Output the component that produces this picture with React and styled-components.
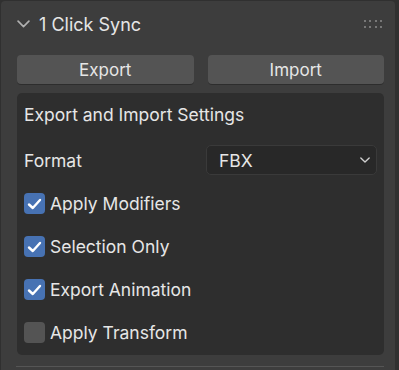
import React, { useState } from "react";
import styled, { createGlobalStyle } from "styled-components";

const Global = createGlobalStyle`
  html, body {
    margin: 0;
    padding: 0;
    background: #303030;
  }
  body {
    font-family: Inter, "Noto Sans", "DejaVu Sans", sans-serif;
    -webkit-font-smoothing: antialiased;
  }
`;

const Screen = styled.div`
  width: 399px;
  height: 370px;
  overflow: hidden;
  padding: 1px 4px 0 1px;
  box-sizing: border-box;
  background: #303030;
`;

const Panel = styled.div`
  height: 100%;
  background: #3d3d3d;
  border-radius: 4px 4px 0 0;
  display: flex;
  flex-direction: column;
`;

const Header = styled.div`
  height: 46px;
  display: flex;
  align-items: center;
  padding: 0 13px 0 16px;
  color: #e6e6e6;
  font-size: 18px;
`;

const Title = styled.span`
  margin-left: 9px;
  flex: 1;
`;

const Grip = styled.div`
  display: grid;
  grid-template-columns: repeat(4, 2px);
  grid-auto-rows: 2px;
  column-gap: 3.5px;
  row-gap: 3.5px;
  span {
    width: 2px;
    height: 2px;
    border-radius: 1px;
    background: #8c8c8c;
  }
`;

const ButtonRow = styled.div`
  display: grid;
  grid-template-columns: 1fr 1fr;
  gap: 14px;
  padding: 8px 11px 0 16px;
`;

const Button = styled.button`
  height: 29px;
  border: none;
  border-radius: 4px;
  background: #545454;
  color: #e6e6e6;
  font-family: inherit;
  font-size: 17px;
  padding: 0;
  box-shadow: 0 1px 0 rgba(0, 0, 0, 0.25);
`;

const Box = styled.div`
  margin: 9px 11px 0 16px;
  height: 262px;
  background: #2e2e2e;
  border-radius: 5px;
  padding: 0 7px;
  display: flex;
  flex-direction: column;
  color: #e6e6e6;
  font-size: 17.5px;
`;

const BoxTitle = styled.div`
  height: 42px;
  display: flex;
  align-items: center;
`;

const FieldRow = styled.div`
  display: grid;
  grid-template-columns: 182px 1fr;
  align-items: center;
  margin-top: 10px;
  margin-bottom: 7px;
  height: 30px;
`;

const Select = styled.div`
  height: 30px;
  box-sizing: border-box;
  border: 1px solid #3a3a3a;
  border-radius: 5px;
  background: #282828;
  display: flex;
  align-items: center;
  justify-content: space-between;
  padding: 0 6px 0 12px;
`;

const CheckRow = styled.label`
  height: 43px;
  display: flex;
  align-items: center;
  gap: 5px;
  cursor: pointer;
`;

const Box2 = styled.span`
  width: 21px;
  height: 21px;
  border-radius: 4px;
  background: ${(p) => (p.$on ? "#4772b3" : "#545454")};
  display: flex;
  align-items: center;
  justify-content: center;
  flex-shrink: 0;
`;

const Footer = styled.div`
  margin: 11px 11px 0 15px;
  height: 1px;
  background: #555555;
`;

const Chevron = ({ size = 12, color = "#b4b4b4", width = 1.5 }) => (
  <svg width={size} height={size * 0.6} viewBox="0 0 12 7" fill="none">
    <path d="M1 1 L6 6 L11 1" stroke={color} strokeWidth={width} strokeLinecap="round" strokeLinejoin="round" />
  </svg>
);

const Tick = () => (
  <svg width="15" height="12" viewBox="0 0 15 12" fill="none">
    <path d="M2 6.5 L5.8 10 L13 2" stroke="#fff" strokeWidth="2.4" strokeLinecap="round" strokeLinejoin="round" />
  </svg>
);

const Check = ({ label, value, onToggle }) => (
  <CheckRow onClick={onToggle}>
    <Box2 $on={value}>{value && <Tick />}</Box2>
    <span>{label}</span>
  </CheckRow>
);

export default function App() {
  const [opts, setOpts] = useState({
    modifiers: true,
    selection: true,
    animation: true,
    transform: false,
  });
  const toggle = (k) => setOpts({ ...opts, [k]: !opts[k] });

  return (
    <>
      <Global />
      <Screen>
        <Panel>
          <Header>
            <Chevron size={13} color="#b0b0b0" />
            <Title>1 Click Sync</Title>
            <Grip>
              {Array.from({ length: 8 }).map((_, i) => (
                <span key={i} />
              ))}
            </Grip>
          </Header>
          <ButtonRow>
            <Button>Export</Button>
            <Button>Import</Button>
          </ButtonRow>
          <Box>
            <BoxTitle>Export and Import Settings</BoxTitle>
            <FieldRow>
              <span>Format</span>
              <Select>
                <span>FBX</span>
                <Chevron size={10} color="#d0d0d0" width={1.6} />
              </Select>
            </FieldRow>
            <Check label="Apply Modifiers" value={opts.modifiers} onToggle={() => toggle("modifiers")} />
            <Check label="Selection Only" value={opts.selection} onToggle={() => toggle("selection")} />
            <Check label="Export Animation" value={opts.animation} onToggle={() => toggle("animation")} />
            <Check label="Apply Transform" value={opts.transform} onToggle={() => toggle("transform")} />
          </Box>
          <Footer />
        </Panel>
      </Screen>
    </>
  );
}
